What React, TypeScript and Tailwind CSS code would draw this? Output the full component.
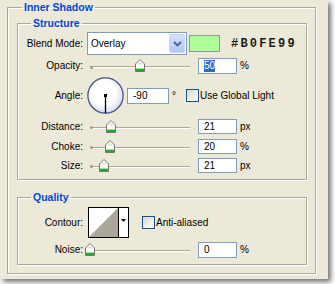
import type { ReactNode } from "react";

// Photoshop "Layer Style > Inner Shadow" panel, XP look

function Label({ children }: { children: ReactNode }) {
  return <div className="w-[65px] shrink-0 text-right">{children}</div>;
}

function Thumb() {
  return (
    <svg width="10" height="13" viewBox="0 0 10 13">
      <path d="M0.5 12.5V5L5 0.5L9.5 5V12.5Z" fill="#fff" stroke="#747474" />
      <path d="M2.2 5.4L5 2.6L7.8 5.4Z" fill="#dedede" />
      <rect x="1" y="9.6" width="8" height="2.4" fill="#1fae26" />
    </svg>
  );
}

function Slider({ pos }: { pos: number }) {
  return (
    <div className="relative ml-[7px] h-[16px] w-[100px] shrink-0">
      <div className="mt-[8px] flex h-[2px] w-full items-center border-t border-[#aba898] bg-white">
        <span className="-mt-[1px] block h-[3px] w-[3px] rounded-full bg-[#9c998b]" />
      </div>
      <div className="absolute top-[1px]" style={{ left: pos - 5 }}>
        <Thumb />
      </div>
    </div>
  );
}

function Field({ value, selected }: { value: string; selected?: boolean }) {
  return (
    <div className="ml-[8px] flex h-full w-[39px] shrink-0 items-center border border-[#7f9db9] bg-white pl-[5px]">
      {selected ? <span className="bg-[#316ac5] text-white">{value}</span> : value}
    </div>
  );
}

function Checkbox() {
  return (
    <div className="h-[13px] w-[13px] shrink-0 border border-[#1c5180] bg-[linear-gradient(135deg,#d8d8d1,#f4f4f0_70%,#fff)]" />
  );
}

function SliderRow({
  label,
  pos,
  value,
  unit,
  className,
  selected,
}: {
  label: string;
  pos: number;
  value: string;
  unit: string;
  className: string;
  selected?: boolean;
}) {
  return (
    <div className={`flex items-center ${className}`}>
      <Label>{label}</Label>
      <Slider pos={pos} />
      <Field value={value} selected={selected} />
      <span className="ml-[3px]">{unit}</span>
    </div>
  );
}

function Dial() {
  return (
    <svg width="37" height="37" viewBox="0 0 37 37" className="ml-[4px] shrink-0">
      <defs>
        <radialGradient id="dialFill" cx="0.45" cy="0.42" r="0.62">
          <stop offset="0.55" stopColor="#ffffff" />
          <stop offset="1" stopColor="#d3d6e2" />
        </radialGradient>
      </defs>
      <circle cx="18.5" cy="18.5" r="17.6" fill="url(#dialFill)" stroke="#44538a" strokeWidth="1.3" />
      <line x1="18.5" y1="18.5" x2="18.5" y2="36.3" stroke="#000" strokeWidth="1.3" />
      <rect x="17" y="17" width="3" height="3" fill="#000" />
    </svg>
  );
}

export default function App() {
  return (
    <div className="h-[284px] w-[335px] bg-white font-['Liberation_Sans',Arial,sans-serif] text-[10px] leading-[12px] text-black">
      <div className="h-[279px] w-[328px] bg-[#ece9d8] pl-[7px] shadow-[3px_3px_5px_rgba(0,0,0,0.55)]">
        <fieldset className="h-[274px] w-[309px] border border-[#aca899] shadow-[inset_1px_1px_0_#fff,1px_1px_0_#fff]">
          <legend className="ml-[14px] px-[2px] text-[10.5px] font-bold leading-[15px] text-[#0046d5]">
            Inner Shadow
          </legend>

          <div className="pl-[9px]">
            {/* Structure */}
            <fieldset className="mt-[1px] h-[164px] w-[290px] border border-[#aca899] shadow-[inset_1px_1px_0_#fff,1px_1px_0_#fff]">
              <legend className="ml-[13px] px-[2px] text-[10.5px] font-bold leading-[15px] text-[#0046d5]">
                Structure
              </legend>

              <div className="mt-[1px] flex h-[23px] items-center">
                <Label>Blend Mode:</Label>
                <div className="ml-[4px] flex h-[23px] w-[100px] shrink-0 items-center border border-[#7f9db9] bg-white p-[1px]">
                  <span className="flex-1 pl-[2px]">Overlay</span>
                  <div className="flex h-full w-[16px] items-center justify-center rounded-[2px] border border-[#c6d4f7] bg-[linear-gradient(#d6e0fd,#b3c6f7)]">
                    <svg width="9" height="6" viewBox="0 0 9 6">
                      <path d="M1 1L4.5 4.5L8 1" fill="none" stroke="#4d6185" strokeWidth="1.8" />
                    </svg>
                  </div>
                </div>
                <div className="ml-[2px] h-[17px] w-[31px] shrink-0 border border-[#8f9a8c] bg-[#b0fe99]" />
                <span className="ml-[11px] font-['Liberation_Mono',monospace] text-[12px] font-bold tracking-[2.2px] text-[#1b1b1b]">
                  #B0FE99
                </span>
              </div>

              <SliderRow className="mt-[3px] h-[16px]" label="Opacity:" pos={50} value="50" unit="%" selected />

              <div className="mt-[3px] flex h-[37px] items-center">
                <Label>Angle:</Label>
                <Dial />
                <div className="ml-[3px] flex h-[16px] w-[42px] shrink-0 items-center border border-[#7f9db9] bg-white pl-[5px]">
                  -90
                </div>
                <span className="ml-[3px]">°</span>
                <div className="ml-[10px]">
                  <Checkbox />
                </div>
                <span className="ml-[1px]">Use Global Light</span>
              </div>

              <SliderRow className="mt-[5px] h-[15px]" label="Distance:" pos={21} value="21" unit="px" />
              <SliderRow className="mt-[5px] h-[15px]" label="Choke:" pos={20} value="20" unit="%" />
              <SliderRow className="mt-[4px] h-[15px]" label="Size:" pos={14} value="21" unit="px" />
            </fieldset>

            {/* Quality */}
            <fieldset className="mt-[10px] h-[75px] w-[290px] border border-[#aca899] shadow-[inset_1px_1px_0_#fff,1px_1px_0_#fff]">
              <legend className="ml-[13px] px-[2px] text-[10.5px] font-bold leading-[15px] text-[#0046d5]">
                Quality
              </legend>

              <div className="mt-[2px] flex h-[31px] items-center">
                <Label>Contour:</Label>
                <div className="ml-[5px] flex h-[31px] w-[41px] shrink-0 border border-black bg-white">
                  <svg width="29" height="29" viewBox="0 0 29 29">
                    <rect width="29" height="29" fill="#fff" />
                    <path d="M0 29L29 0V29Z" fill="#aaa698" />
                  </svg>
                  <div className="flex w-[10px] items-center justify-center border-l border-black pb-[4px]">
                    <svg width="5" height="3" viewBox="0 0 5 3">
                      <path d="M0 0H5L2.5 3Z" fill="#000" />
                    </svg>
                  </div>
                </div>
                <div className="ml-[13px]">
                  <Checkbox />
                </div>
                <span className="ml-[1px]">Anti-aliased</span>
              </div>

              <SliderRow className="mt-[4px] h-[16px]" label="Noise:" pos={0} value="0" unit="%" />
            </fieldset>
          </div>
        </fieldset>
      </div>
    </div>
  );
}
